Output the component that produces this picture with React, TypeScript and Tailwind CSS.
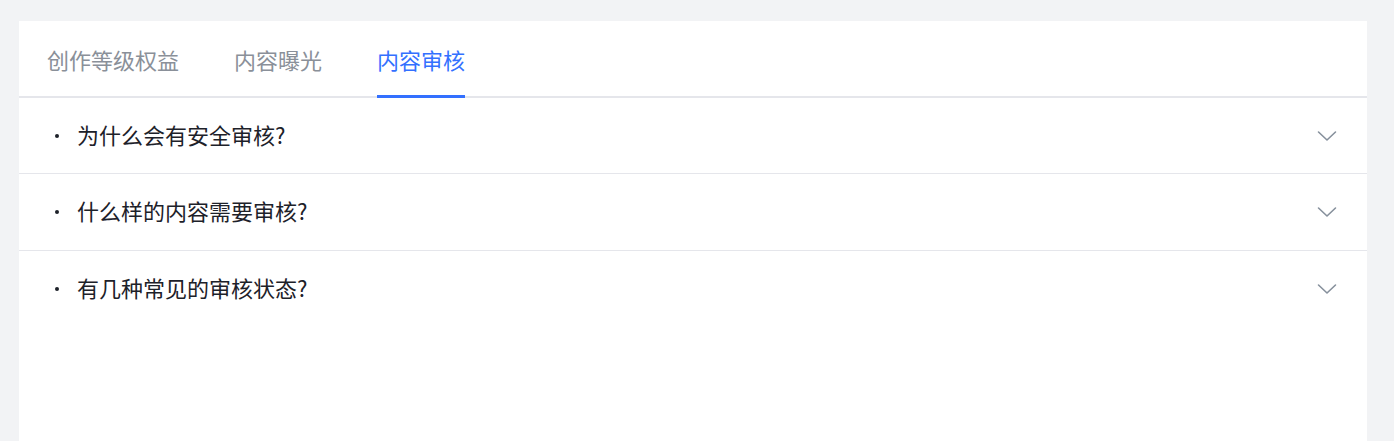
import React from "react";

const tabs = ["创作等级权益", "内容曝光", "内容审核"];
const questions = ["为什么会有安全审核?", "什么样的内容需要审核?", "有几种常见的审核状态?"];

const ChevronDown: React.FC = () => (
    <svg width="20" height="12" viewBox="0 0 20 12" fill="none">
        <path d="M1.5 2L10 10L18.5 2" stroke="#86909c" strokeWidth="1.6" strokeLinecap="round" strokeLinejoin="round" />
    </svg>
);

const App: React.FC = () => {
    const active = 2;
    return (
        <div
            className="w-[1394px] h-[441px] bg-[#f2f3f5] pt-[21px] pl-[19px] overflow-hidden"
            style={{ fontFamily: '"Noto Sans CJK SC", "Noto Sans", sans-serif' }}
        >
            <div className="w-[1348px] h-[420px] bg-white">
                <div className="flex gap-[55px] px-[28px] h-[77px] border-b-2 border-[#e5e6eb]">
                    {tabs.map((t, i) => (
                        <div key={t} className="relative h-full flex items-center">
                            <span
                                className={
                                    i === active
                                        ? "text-[22px] leading-none text-[#3370ff]"
                                        : "text-[22px] leading-none text-[#8a9099]"
                                }
                            >
                                {t}
                            </span>
                            {i === active && (
                                <div className="absolute left-0 right-0 bottom-[-2px] h-[3px] bg-[#3370ff]" />
                            )}
                        </div>
                    ))}
                </div>
                <div className="flex flex-col">
                    {questions.map((q, i) => (
                        <div
                            key={q}
                            className={
                                i === 0
                                    ? "flex items-center h-[75px] pl-[36px] pr-[30px]"
                                    : "flex items-center h-[77px] pl-[36px] pr-[30px] border-t border-[#e5e6eb]"
                            }
                        >
                            <div className="w-[4px] h-[4px] rounded-full bg-[#1d2129]" />
                            <span className="ml-[18px] text-[22px] leading-[30px] pb-[4px] text-[#1d2129]">{q}</span>
                            <div className="ml-auto">
                                <ChevronDown />
                            </div>
                        </div>
                    ))}
                </div>
            </div>
        </div>
    );
};

export default App;
